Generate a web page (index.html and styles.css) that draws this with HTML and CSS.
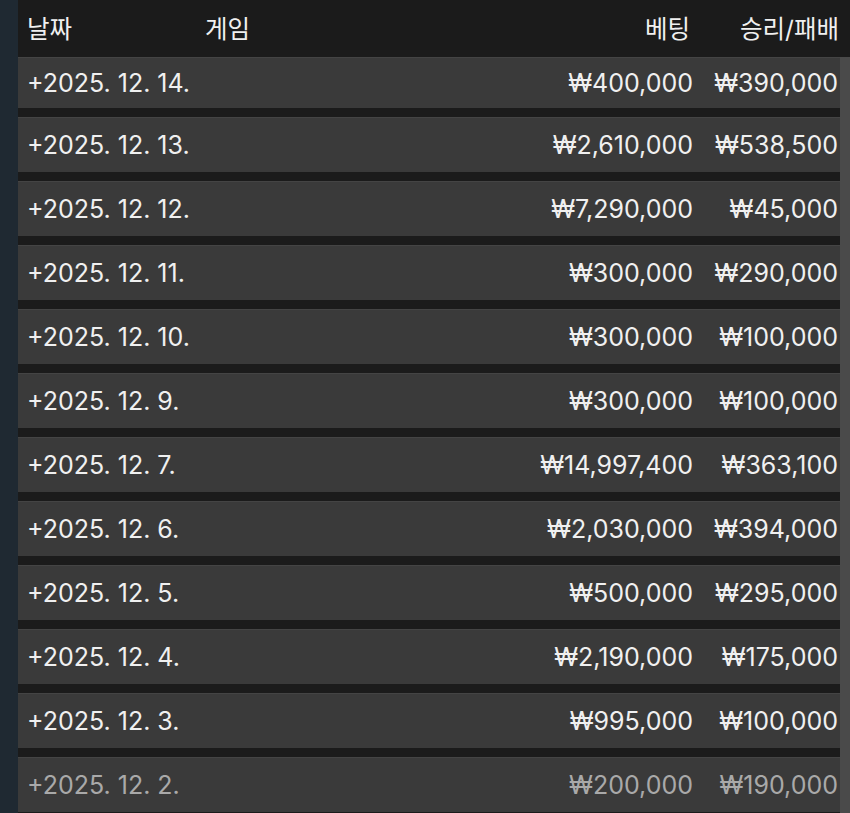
FILE: index.html
```html
<!DOCTYPE html>
<html lang="ko">
<head>
<meta charset="utf-8">
<link rel="stylesheet" href="styles.css">
</head>
<body>
<div class="screen">
  <div class="side"></div>
  <div class="table">
    <div class="head">
      <span class="c-date">날짜</span>
      <span class="c-game">게임</span>
      <span class="c-bet">베팅</span>
      <span class="c-win">승리/패배</span>
    </div>
    <div class="body">
      <div class="rows">
        <div class="row"><span class="c-date">+2025. 12. 14.</span><span class="c-game"></span><span class="c-bet">₩400,000</span><span class="c-win">₩390,000</span></div>
        <div class="row"><span class="c-date">+2025. 12. 13.</span><span class="c-game"></span><span class="c-bet">₩2,610,000</span><span class="c-win">₩538,500</span></div>
        <div class="row"><span class="c-date">+2025. 12. 12.</span><span class="c-game"></span><span class="c-bet">₩7,290,000</span><span class="c-win">₩45,000</span></div>
        <div class="row"><span class="c-date">+2025. 12. 11.</span><span class="c-game"></span><span class="c-bet">₩300,000</span><span class="c-win">₩290,000</span></div>
        <div class="row"><span class="c-date">+2025. 12. 10.</span><span class="c-game"></span><span class="c-bet">₩300,000</span><span class="c-win">₩100,000</span></div>
        <div class="row"><span class="c-date">+2025. 12. 9.</span><span class="c-game"></span><span class="c-bet">₩300,000</span><span class="c-win">₩100,000</span></div>
        <div class="row"><span class="c-date">+2025. 12. 7.</span><span class="c-game"></span><span class="c-bet">₩14,997,400</span><span class="c-win">₩363,100</span></div>
        <div class="row"><span class="c-date">+2025. 12. 6.</span><span class="c-game"></span><span class="c-bet">₩2,030,000</span><span class="c-win">₩394,000</span></div>
        <div class="row"><span class="c-date">+2025. 12. 5.</span><span class="c-game"></span><span class="c-bet">₩500,000</span><span class="c-win">₩295,000</span></div>
        <div class="row"><span class="c-date">+2025. 12. 4.</span><span class="c-game"></span><span class="c-bet">₩2,190,000</span><span class="c-win">₩175,000</span></div>
        <div class="row"><span class="c-date">+2025. 12. 3.</span><span class="c-game"></span><span class="c-bet">₩995,000</span><span class="c-win">₩100,000</span></div>
        <div class="row faded"><span class="c-date">+2025. 12. 2.</span><span class="c-game"></span><span class="c-bet">₩200,000</span><span class="c-win">₩190,000</span></div>
      </div>
      <div class="scroll"></div>
    </div>
  </div>
</div>
</body>
</html>
```

FILE: styles.css
```css
html, body {
  margin: 0;
  padding: 0;
  height: 100%;
  overflow: hidden;
  background: #1b1b1b;
}

.screen {
  display: flex;
  height: 813px;
  font-family: Inter, "Noto Sans CJK KR", sans-serif;
  color: #f0f0f0;
  font-size: 25px;
}

.side {
  width: 18px;
  flex: none;
  background: #1f2932;
}

.table {
  flex: 1;
  display: flex;
  flex-direction: column;
  background: #1b1b1b;
}

.head,
.row {
  display: grid;
  grid-template-columns: 178px 1fr 153px 145px;
  align-items: center;
  padding-left: 9px;
  padding-right: 2px;
}

.head {
  height: 57px;
  padding-right: 11px;
  padding-bottom: 2px;
  box-sizing: border-box;
  font-size: 24.5px;
}

.c-bet,
.c-win {
  text-align: right;
  white-space: nowrap;
}

.head .c-bet {
  padding-right: 4px;
}

.body {
  flex: 1;
  display: flex;
  overflow: hidden;
}

.rows {
  flex: 1;
  display: flex;
  flex-direction: column;
  gap: 9px;
}

.row {
  flex: none;
  height: 55px;
  background: #3a3a3a;
  border-top: 1px solid #444;
  box-sizing: border-box;
}

.row:first-child {
  height: 51px;
}

.row.faded {
  color: #a9a9a9;
}

.scroll {
  width: 10px;
  flex: none;
  background: #4a4a4a;
}
```
